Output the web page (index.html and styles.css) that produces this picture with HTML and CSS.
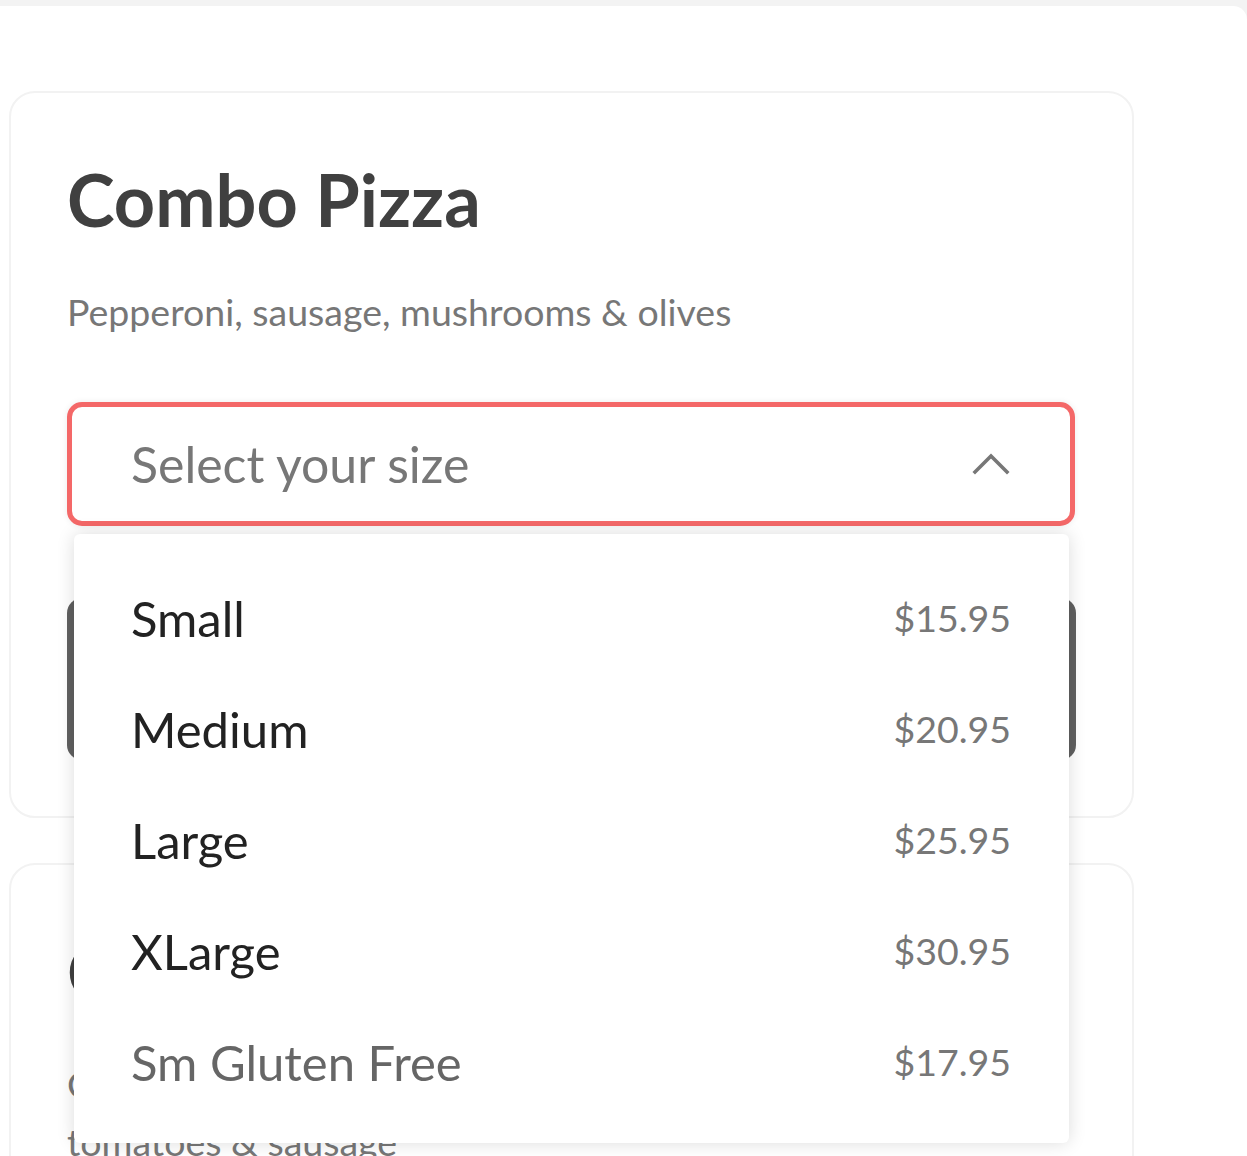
FILE: index.html
```html
<!DOCTYPE html>
<html lang="en">
<head>
<meta charset="utf-8">
<title>Combo Pizza</title>
<link rel="stylesheet" href="styles.css">
</head>
<body>
<div class="panel">
  <section class="card">
    <h1 class="card-title">Combo Pizza</h1>
    <p class="card-desc">Pepperoni, sausage, mushrooms &amp; olives</p>
    <div class="select-wrap">
      <div class="select">
        <span class="select-placeholder">Select your size</span>
        <svg class="chevron" width="40" height="24" viewBox="0 0 40 24">
          <path d="M3 20 L19 4 L35 20" fill="none" stroke="#777" stroke-width="3.6" stroke-linecap="square"/>
        </svg>
      </div>
      <ul class="dropdown">
        <li class="option"><span class="option-name">Small</span><span class="option-price">$15.95</span></li>
        <li class="option"><span class="option-name">Medium</span><span class="option-price">$20.95</span></li>
        <li class="option"><span class="option-name">Large</span><span class="option-price">$25.95</span></li>
        <li class="option"><span class="option-name">XLarge</span><span class="option-price">$30.95</span></li>
        <li class="option option-muted"><span class="option-name">Sm Gluten Free</span><span class="option-price">$17.95</span></li>
      </ul>
    </div>
    <button class="add-btn">Add to order</button>
  </section>
  <section class="card">
    <h1 class="card-title">Chicago Special</h1>
    <p class="card-desc">Chorizo, pepperoni, onions, green peppers, basil,<br>tomatoes &amp; sausage</p>
  </section>
</div>
</body>
</html>
```
FILE: styles.css
```css
html, body {
  margin: 0;
  padding: 0;
  height: 1156px;
  overflow: hidden;
  background: #f3f3f3;
  font-family: "Lato", "Noto Sans", sans-serif;
}

.panel {
  margin: 6px 0 0 -30px;
  padding: 85px 0 0 39px;
  background: #fff;
  border-top-right-radius: 14px;
  min-height: 1200px;
}

.card {
  width: 1125px;
  box-sizing: border-box;
  border: 2px solid #f2f2f2;
  border-radius: 26px;
  padding: 66px 57px 56px 56px;
  background: #fff;
}

.card + .card {
  margin-top: 45px;
}

.card-title {
  margin: 0;
  font-size: 72px;
  line-height: 80px;
  font-weight: 700;
  color: #404040;
}

.card-desc {
  margin: 44px 0 0;
  font-size: 37.5px;
  line-height: 58px;
  color: #777;
}

.select-wrap {
  position: relative;
  margin-top: 61px;
}

.select {
  height: 124px;
  box-sizing: border-box;
  border: 5px solid #f46868;
  border-radius: 15px;
  padding: 0 58px 0 59px;
  display: flex;
  align-items: center;
  justify-content: space-between;
  box-shadow: 0 0 6px rgba(0, 0, 0, 0.08);
  background: #fff;
}

.select-placeholder {
  font-size: 50px;
  color: #777;
}

.chevron {
  display: block;
}

.dropdown {
  position: absolute;
  top: calc(100% + 8px);
  left: 7px;
  right: 6px;
  margin: 0;
  padding: 28px 0 26px;
  list-style: none;
  background: #fff;
  border-radius: 6px;
  box-shadow: 0 0 18px rgba(0, 0, 0, 0.14);
  z-index: 2;
}

.option {
  height: 111px;
  display: flex;
  align-items: center;
  justify-content: space-between;
  padding: 0 58px 0 57px;
}

.option-name {
  font-size: 49px;
  color: #222;
}

.option-muted .option-name {
  color: #666;
}

.option-price {
  font-size: 37.5px;
  color: #777;
}

.add-btn {
  display: block;
  width: 1009px;
  height: 162px;
  margin-top: 72px;
  border: none;
  border-radius: 15px;
  background: #606060;
  color: #fff;
  font-family: inherit;
  font-size: 40px;
}
```
